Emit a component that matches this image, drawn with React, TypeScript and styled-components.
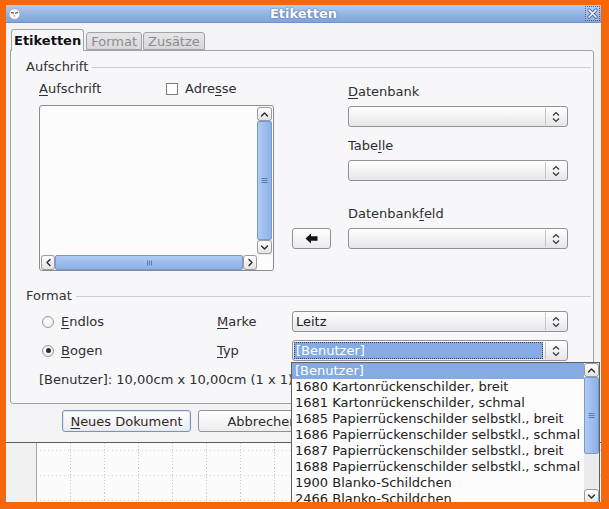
import React from 'react';
import styled, { createGlobalStyle } from 'styled-components';

const Global = createGlobalStyle`
  html, body { margin: 0; padding: 0; background: #f4670d; }
  body { font-family: "DejaVu Sans", "Liberation Sans", sans-serif; font-size: 13px; color: #2e2e2e; }
`;

const Frame = styled.div`
  width: 609px;
  height: 509px;
  box-sizing: border-box;
  background: #f4670d;
  padding: 5px 8px 7px 6px;
`;

const Window = styled.div`
  position: relative;
  width: 595px;
  height: 497px;
  overflow: hidden;
  display: flex;
  flex-direction: column;
  background: #f3f3f5;
`;

const TitleBar = styled.div`
  flex: none;
  height: 18px;
  display: grid;
  grid-template-columns: 24px 1fr 24px;
  align-items: center;
  background: linear-gradient(#b3cdf2, #93b3e4 55%, #7fa3da);
  border-bottom: 1px solid #7092c8;
  box-sizing: border-box;
`;

const TitleText = styled.div`
  text-align: center;
  color: #fff;
  font-weight: bold;
  font-size: 13px;
  line-height: 17px;
  text-shadow: 0 0 2px #4d6fa8, 0 0 1px #4d6fa8;
`;

const AppIcon = styled.div`
  padding-left: 2px;
  display: flex;
  align-items: center;
`;

const CloseBox = styled.div`
  justify-self: end;
  width: 15px;
  height: 15px;
  margin-right: 1px;
  box-sizing: border-box;
  border: 1px dotted #3d5f9a;
  display: flex;
  align-items: center;
  justify-content: center;
  background: rgba(255, 255, 255, 0.15);
`;

const Dialog = styled.div`
  flex: none;
  height: 420px;
  box-sizing: border-box;
  padding: 6px 0 0 4px;
  border-bottom: 1px solid #5d5d5d;
  background: #f3f3f5;
  display: flex;
  flex-direction: column;
`;

const TabRow = styled.div`
  display: flex;
  align-items: flex-end;
  height: 21px;
  padding-left: 1px;
  position: relative;
  z-index: 1;
`;

const Tab = styled.div<{ $active?: boolean }>`
  box-sizing: border-box;
  height: ${p => (p.$active ? '22px' : '18px')};
  margin-bottom: ${p => (p.$active ? '-1px' : '0')};
  margin-right: ${p => (p.$active ? '2px' : '1px')};
  padding: 0 ${p => (p.$active ? '2px' : '4px')};
  border: 1px solid #a3a3a6;
  border-bottom: ${p => (p.$active ? 'none' : '1px solid #a3a3a6')};
  border-radius: 3px 3px 0 0;
  background: ${p => (p.$active ? '#f7f7f9' : 'linear-gradient(#e6e6e8, #d8d8db)')};
  color: ${p => (p.$active ? '#111' : '#8c8c8c')};
  font-weight: ${p => (p.$active ? 'bold' : 'normal')};
  display: flex;
  align-items: center;
  white-space: nowrap;
`;

const Panel = styled.div`
  width: 584px;
  height: 354px;
  box-sizing: border-box;
  border: 1px solid #a3a3a6;
  border-radius: 0 3px 3px 3px;
  background: #f7f7f9;
  padding-top: 8px;
  display: flex;
  flex-direction: column;
`;

const GroupHeader = styled.div<{ $gap?: number }>`
  display: flex;
  align-items: center;
  height: 16px;
  padding-left: 15px;
  margin-top: ${p => p.$gap ?? 0}px;
`;

const GroupTitle = styled.span`
  line-height: 16px;
  color: #333;
`;

const GroupLine = styled.div`
  flex: 1;
  height: 1px;
  background: #cdcdd0;
  margin: 0 2px 0 4px;
`;

const AufschriftBody = styled.div`
  display: flex;
  padding-left: 28px;
`;

const LeftCol = styled.div`
  width: 235px;
  display: flex;
  flex-direction: column;
`;

const LabelRow = styled.div`
  display: grid;
  grid-template-columns: 127px auto;
  align-items: center;
  margin-top: 6px;
  height: 16px;
`;

const Label = styled.span<{ $top?: number; $col?: number }>`
  line-height: 16px;
  white-space: nowrap;
  margin-top: ${p => p.$top ?? 0}px;
  grid-column: ${p => p.$col ?? 'auto'};
`;

const Mn = styled.u`
  text-decoration: underline;
  text-underline-offset: 2px;
  text-decoration-thickness: 1px;
`;

const CheckItem = styled.div`
  display: flex;
  align-items: center;
  gap: 7px;
`;

const CheckBox = styled.div`
  width: 12px;
  height: 12px;
  box-sizing: border-box;
  border: 1px solid #7e7e80;
  background: #fff;
`;

const TextBox = styled.div`
  margin-top: 8px;
  height: 166px;
  box-sizing: border-box;
  border: 1px solid #8c8c8e;
  border-radius: 3px;
  background: #fcfcfc;
  padding: 1px 1px 0 1px;
  display: grid;
  grid-template-columns: 1fr 15px;
  grid-template-rows: 1fr 15px;
`;

const VScroll = styled.div`
  display: flex;
  flex-direction: column;
  width: 15px;
  padding-bottom: 1px;
  box-sizing: border-box;
  background: #ececef;
`;

const HScroll = styled.div`
  display: flex;
  flex-direction: row;
  height: 15px;
  background: #ececef;
`;

const SBtn = styled.div<{ $h?: boolean }>`
  flex: none;
  ${p => (p.$h ? 'width: 14px; height: 15px;' : 'width: 15px; height: 14px;')}
  box-sizing: border-box;
  border: 1px solid #9c9c9f;
  border-radius: 3px;
  background: linear-gradient(#ffffff, #e4e4e7);
  display: flex;
  align-items: center;
  justify-content: center;
`;

const Thumb = styled.div<{ $h?: boolean; $len?: number }>`
  ${p => (p.$len ? `flex: none; height: ${p.$len}px;` : 'flex: 1;')}
  box-sizing: border-box;
  border: 1px solid #7699d2;
  border-radius: 2px;
  background: ${p =>
    p.$h ? 'linear-gradient(#b0cbf3, #8db0e6)' : 'linear-gradient(90deg, #b0cbf3, #8db0e6)'};
  display: flex;
  align-items: center;
  justify-content: center;
`;

const Track = styled.div`
  flex: 1;
`;

const RightGrid = styled.div`
  margin-left: 18px;
  display: grid;
  grid-template-columns: 39px 220px;
  column-gap: 17px;
  align-content: start;
`;

const Combo = styled.div<{ $top?: number; $col?: number }>`
  grid-column: ${p => p.$col ?? 'auto'};
  margin-top: ${p => p.$top ?? 0}px;
  height: 21px;
  box-sizing: border-box;
  border: 1px solid #929295;
  border-radius: 3px;
  background: linear-gradient(#ffffff, #f0f0f2 60%, #e6e6e9);
  display: flex;
  align-items: stretch;
  padding: 1px;
`;

const ComboField = styled.div<{ $sel?: boolean }>`
  flex: 1;
  display: flex;
  align-items: center;
  padding-left: 2px;
  white-space: nowrap;
  color: ${p => (p.$sel ? '#fff' : '#222')};
  background: ${p => (p.$sel ? '#86abe4' : 'transparent')};
  outline: ${p => (p.$sel ? '1px dotted #2e3e5c' : 'none')};
  outline-offset: -1px;
  border-radius: 1px;
`;

const Spin = styled.div`
  flex: none;
  width: 20px;
  margin-left: 2px;
  border-left: 1px solid #c4c4c7;
  display: flex;
  align-items: center;
  justify-content: center;
`;

const ArrowButton = styled.div<{ $top?: number }>`
  grid-column: 1;
  margin-top: ${p => p.$top ?? 0}px;
  height: 21px;
  box-sizing: border-box;
  border: 1px solid #929295;
  border-radius: 3px;
  background: linear-gradient(#ffffff, #ebebee);
  display: flex;
  align-items: center;
  justify-content: center;
`;

const FormatGrid = styled.div`
  display: grid;
  grid-template-columns: 175px 75px 276px;
  grid-auto-rows: 21px;
  row-gap: 8px;
  align-items: center;
  padding-left: 31px;
  margin-top: 7px;
`;

const RadioItem = styled.div`
  display: flex;
  align-items: center;
  gap: 7px;
`;

const Radio = styled.div<{ $on?: boolean }>`
  width: 12px;
  height: 12px;
  box-sizing: border-box;
  border: 1px solid #9a9a9d;
  border-radius: 50%;
  background: radial-gradient(circle at 40% 35%, #ffffff, #e8e8ea);
  display: flex;
  align-items: center;
  justify-content: center;
  &::after {
    content: '';
    display: ${p => (p.$on ? 'block' : 'none')};
    width: 5px;
    height: 5px;
    border-radius: 50%;
    background: #2c2c2c;
  }
`;

const InfoText = styled.div`
  grid-column: 1 / -1;
  margin-left: -3px;
  white-space: nowrap;
  line-height: 16px;
`;

const ButtonRow = styled.div`
  display: flex;
  gap: 7px;
  margin-top: 6px;
  padding-left: 52px;
`;

const Button = styled.div<{ $default?: boolean }>`
  width: 129px;
  height: 22px;
  box-sizing: border-box;
  border: 1px solid ${p => (p.$default ? '#7c93b8' : '#929295')};
  border-radius: 3px;
  background: linear-gradient(#ffffff, #ececef);
  box-shadow: ${p => (p.$default ? 'inset 0 0 0 1px #dbe6f6' : 'none')};
  display: flex;
  align-items: center;
  justify-content: center;
  white-space: nowrap;
  color: #2a2a2a;
`;

const DocArea = styled.div`
  flex: 1;
  display: flex;
  background: #fbfbfb;
`;

const Ruler = styled.div`
  width: 30px;
  flex: none;
  background: #f1f1f2;
  border-right: 1px solid #a9a9ab;
`;

const Sheet = styled.div`
  flex: 1;
  display: flex;
  svg { display: block; }
`;

const DropList = styled.div`
  position: absolute;
  left: 285px;
  top: 357px;
  width: 309px;
  height: 142px;
  box-sizing: border-box;
  border: 1px solid #5f5f62;
  background: #fcfcfc;
  display: flex;
  z-index: 5;
`;

const Items = styled.div`
  flex: 1;
  display: flex;
  flex-direction: column;
  overflow: hidden;
`;

const Item = styled.div<{ $sel?: boolean }>`
  flex: none;
  height: 16px;
  line-height: 16px;
  padding-left: 3px;
  white-space: nowrap;
  color: ${p => (p.$sel ? '#fff' : '#222')};
  background: ${p => (p.$sel ? '#86abe4' : 'transparent')};
`;

const ListScroll = styled.div`
  width: 15px;
  flex: none;
  display: flex;
  flex-direction: column;
  background: #ececef;
`;

type Dir = 'up' | 'down' | 'left' | 'right';
const Chev = ({ dir }: { dir: Dir }) => {
  const d =
    dir === 'up'
      ? 'M1.5 5 L4.5 2 L7.5 5'
      : dir === 'down'
      ? 'M1.5 2 L4.5 5 L7.5 2'
      : dir === 'left'
      ? 'M5 1.5 L2 4.5 L5 7.5'
      : 'M2 1.5 L5 4.5 L2 7.5';
  const horiz = dir === 'left' || dir === 'right';
  return (
    <svg width={horiz ? 7 : 9} height={horiz ? 9 : 7} viewBox={horiz ? '0 0 7 9' : '0 0 9 7'}>
      <path d={d} stroke="#2a2a2a" strokeWidth="1.4" fill="none" strokeLinecap="round" strokeLinejoin="round" />
    </svg>
  );
};

const SpinIcon = () => (
  <svg width="10" height="14" viewBox="0 0 10 14">
    <path d="M2 5.5 L5 2.5 L8 5.5" stroke="#333" strokeWidth="1.2" fill="none" />
    <path d="M2 8.5 L5 11.5 L8 8.5" stroke="#333" strokeWidth="1.2" fill="none" />
  </svg>
);

const Grip = ({ h }: { h?: boolean }) =>
  h ? (
    <svg width="7" height="6" viewBox="0 0 7 6">
      <path d="M1.5 0.5 V5.5 M3.5 0.5 V5.5 M5.5 0.5 V5.5" stroke="#5a7bb5" strokeWidth="1" />
    </svg>
  ) : (
    <svg width="7" height="7" viewBox="0 0 7 7">
      <path d="M0.5 1.5 H6.5 M0.5 3.5 H6.5 M0.5 5.5 H6.5" stroke="#5a7bb5" strokeWidth="1" />
    </svg>
  );

const ArrowLeftIcon = () => (
  <svg width="13" height="11" viewBox="0 0 13 11">
    <polygon points="0.5,5.5 6,0.5 6,3.3 12.5,3.3 12.5,7.7 6,7.7 6,10.5" fill="#151515" />
  </svg>
);

const AppGlyph = () => (
  <svg width="13" height="13" viewBox="0 0 13 13">
    <ellipse cx="6.5" cy="7" rx="5.5" ry="5.3" fill="#fbfbfb" stroke="#9aa6b8" strokeWidth="0.8" />
    <path d="M3 5.5 L6 6.3 M7 6.3 L10 5.5" stroke="#333" strokeWidth="1.1" />
    <circle cx="6.5" cy="8.8" r="0.9" fill="#c9a13a" />
  </svg>
);

const CloseGlyph = () => (
  <svg width="11" height="11" viewBox="0 0 11 11">
    <path d="M2 2 L9 9 M9 2 L2 9" stroke="#3f5f96" strokeWidth="3.2" strokeLinecap="round" />
    <path d="M2 2 L9 9 M9 2 L2 9" stroke="#ffffff" strokeWidth="1.7" strokeLinecap="round" />
  </svg>
);

const SheetGrid = () => (
  <svg width="100%" height="100%">
    <defs>
      <pattern id="docgrid" x="33" y="0" width="34" height="25" patternUnits="userSpaceOnUse">
        <line x1="0.5" y1="0" x2="0.5" y2="25" stroke="#c9c9cc" strokeDasharray="1 2" />
        <line x1="0" y1="7.5" x2="34" y2="7.5" stroke="#d6d6d8" strokeDasharray="1 3" />
      </pattern>
    </defs>
    <rect width="100%" height="100%" fill="url(#docgrid)" />
  </svg>
);

const items = [
  '[Benutzer]',
  '1680 Kartonrückenschilder, breit',
  '1681 Kartonrückenschilder, schmal',
  '1685 Papierrückenschilder selbstkl., breit',
  '1686 Papierrückenschilder selbstkl., schmal',
  '1687 Papierrückenschilder selbstkl., breit',
  '1688 Papierrückenschilder selbstkl., schmal',
  '1900 Blanko-Schildchen',
  '2466 Blanko-Schildchen',
];

export default function App() {
  return (
    <>
      <Global />
      <Frame>
        <Window>
          <TitleBar>
            <AppIcon>
              <AppGlyph />
            </AppIcon>
            <TitleText>Etiketten</TitleText>
            <CloseBox>
              <CloseGlyph />
            </CloseBox>
          </TitleBar>

          <Dialog>
            <TabRow>
              <Tab $active>Etiketten</Tab>
              <Tab>Format</Tab>
              <Tab>Zusätze</Tab>
            </TabRow>
            <Panel>
              <GroupHeader>
                <GroupTitle>Aufschrift</GroupTitle>
                <GroupLine />
              </GroupHeader>
              <AufschriftBody>
                <LeftCol>
                  <LabelRow>
                    <Label>
                      <Mn>A</Mn>ufschrift
                    </Label>
                    <CheckItem>
                      <CheckBox />
                      <Label>
                        Adre<Mn>s</Mn>se
                      </Label>
                    </CheckItem>
                  </LabelRow>
                  <TextBox>
                    <div />
                    <VScroll>
                      <SBtn>
                        <Chev dir="up" />
                      </SBtn>
                      <Thumb>
                        <Grip />
                      </Thumb>
                      <SBtn>
                        <Chev dir="down" />
                      </SBtn>
                    </VScroll>
                    <HScroll>
                      <SBtn $h>
                        <Chev dir="left" />
                      </SBtn>
                      <Thumb $h>
                        <Grip h />
                      </Thumb>
                      <SBtn $h>
                        <Chev dir="right" />
                      </SBtn>
                    </HScroll>
                    <div />
                  </TextBox>
                </LeftCol>
                <RightGrid>
                  <Label $col={2} $top={9}>
                    <Mn>D</Mn>atenbank
                  </Label>
                  <Combo $col={2} $top={6}>
                    <ComboField />
                    <Spin>
                      <SpinIcon />
                    </Spin>
                  </Combo>
                  <Label $col={2} $top={11}>
                    Tabe<Mn>l</Mn>le
                  </Label>
                  <Combo $col={2} $top={6}>
                    <ComboField />
                    <Spin>
                      <SpinIcon />
                    </Spin>
                  </Combo>
                  <Label $col={2} $top={25}>
                    Datenbank<Mn>f</Mn>eld
                  </Label>
                  <ArrowButton $top={6}>
                    <ArrowLeftIcon />
                  </ArrowButton>
                  <Combo $col={2} $top={6}>
                    <ComboField />
                    <Spin>
                      <SpinIcon />
                    </Spin>
                  </Combo>
                </RightGrid>
              </AufschriftBody>

              <GroupHeader $gap={17}>
                <GroupTitle>Format</GroupTitle>
                <GroupLine />
              </GroupHeader>
              <FormatGrid>
                <RadioItem>
                  <Radio />
                  <Label>
                    <Mn>E</Mn>ndlos
                  </Label>
                </RadioItem>
                <Label>
                  <Mn>M</Mn>arke
                </Label>
                <Combo>
                  <ComboField>Leitz</ComboField>
                  <Spin>
                    <SpinIcon />
                  </Spin>
                </Combo>
                <RadioItem>
                  <Radio $on />
                  <Label>
                    <Mn>B</Mn>ogen
                  </Label>
                </RadioItem>
                <Label>
                  <Mn>T</Mn>yp
                </Label>
                <Combo>
                  <ComboField $sel>[Benutzer]</ComboField>
                  <Spin>
                    <SpinIcon />
                  </Spin>
                </Combo>
                <InfoText>[Benutzer]: 10,00cm x 10,00cm (1 x 1)</InfoText>
              </FormatGrid>
            </Panel>
            <ButtonRow>
              <Button $default>
                <span>
                  <Mn>N</Mn>eues Dokument
                </span>
              </Button>
              <Button>Abbrechen</Button>
            </ButtonRow>
          </Dialog>

          <DocArea>
            <Ruler />
            <Sheet>
              <SheetGrid />
            </Sheet>
          </DocArea>

          <DropList>
            <Items>
              {items.map((t, i) => (
                <Item key={t + i} $sel={i === 0}>
                  {t}
                </Item>
              ))}
            </Items>
            <ListScroll>
              <SBtn>
                <Chev dir="up" />
              </SBtn>
              <Thumb $len={77}>
                <Grip />
              </Thumb>
              <Track />
              <SBtn>
                <Chev dir="down" />
              </SBtn>
            </ListScroll>
          </DropList>
        </Window>
      </Frame>
    </>
  );
}
